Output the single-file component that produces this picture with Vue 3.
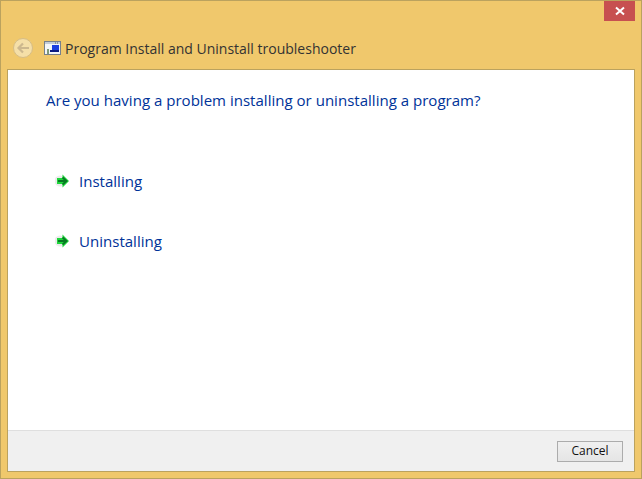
<script setup>
const options = ['Installing', 'Uninstalling']
</script>

<template>
  <div class="window">
    <div class="caption">
      <button class="close" aria-label="Close">
        <svg width="10" height="10" viewBox="0 0 10 10">
          <path d="M1 1.5 L9 8.5 M9 1.5 L1 8.5" stroke="#fff" stroke-width="2" fill="none" />
        </svg>
      </button>
    </div>
    <div class="titlebar">
      <span class="back">
        <svg width="14" height="12" viewBox="0 0 14 12">
          <path d="M13 6 H3 M7 1.5 L2.5 6 L7 10.5" stroke="#cdb88e" stroke-width="2.2" fill="none" />
        </svg>
      </span>
      <svg class="app-icon" width="17" height="14" viewBox="0 0 17 14">
        <rect x="0.5" y="0.5" width="16" height="13" fill="#f4f6f8" stroke="#77808c" />
        <rect x="1" y="1" width="15" height="2" fill="#c3ccd8" />
        <path d="M11 2 h1 M13 2 h1" stroke="#556" stroke-width="1" />
        <rect x="8" y="4" width="7" height="6" fill="#1c3fe0" />
        <rect x="6" y="9" width="9" height="2" fill="#0b1a80" />
        <rect x="3" y="8" width="2" height="5" fill="#7e9a7a" />
      </svg>
      <span class="title">Program Install and Uninstall troubleshooter</span>
    </div>
    <div class="content">
      <div class="main">
        <h1>Are you having a problem installing or uninstalling a program?</h1>
        <ul class="options">
          <li v-for="opt in options" :key="opt">
            <svg class="arrow" width="16" height="16" viewBox="0 0 16 16">
              <circle cx="5" cy="8" r="5.5" fill="#e6e6e6" opacity="0.8" />
              <path d="M2 5 H7.5 V1.5 L14 8 L7.5 14.5 V11 H2 Z" fill="#1fd63c" />
              <path d="M3 8 H10.5 M7.5 4.5 L11.5 8 L7.5 11.5" stroke="#067a22" stroke-width="1.8" fill="none" />
            </svg>
            <span>{{ opt }}</span>
          </li>
        </ul>
      </div>
      <div class="footer">
        <button class="cancel">Cancel</button>
      </div>
    </div>
  </div>
</template>

<style>
html, body {
  margin: 0;
  background: #f0c86c;
}
</style>

<style scoped>
.window {
  box-sizing: border-box;
  width: 642px;
  height: 479px;
  background: #f0c86c;
  border: 1px solid #bba25e;
  display: flex;
  flex-direction: column;
  font-family: "Open Sans", "Noto Sans", sans-serif;
}

.caption {
  height: 20px;
  display: flex;
  justify-content: flex-end;
  padding-right: 6px;
}

.close {
  width: 31px;
  height: 20px;
  background: #c75050;
  border: none;
  padding: 0;
  display: flex;
  align-items: center;
  justify-content: center;
}

.titlebar {
  height: 48px;
  display: flex;
  align-items: center;
  padding: 6px 0 0 12px;
  box-sizing: border-box;
}

.back {
  width: 18px;
  height: 18px;
  border-radius: 50%;
  background: #f5dfa8;
  border: 1px solid #d6bd86;
  display: flex;
  align-items: center;
  justify-content: center;
}

.app-icon {
  margin-left: 11px;
}

.title {
  margin-left: 4px;
  font-size: 14px;
  color: #333;
}

.content {
  flex: 1;
  margin: 0 6px 6px;
  background: #fff;
  border: 1px solid #bba25e;
  display: flex;
  flex-direction: column;
}

.main {
  flex: 1;
  padding: 20px 0 0 38px;
}

h1 {
  margin: 0;
  font-size: 15.06px;
  font-weight: 400;
  line-height: 20px;
  color: #003399;
}

.options {
  list-style: none;
  margin: 41px 0 0;
  padding: 0;
}

.options li {
  height: 60px;
  display: flex;
  align-items: center;
  font-size: 15.06px;
  color: #003399;
}

.arrow {
  margin: 0 8px 0 9px;
}

.footer {
  height: 41px;
  box-sizing: border-box;
  background: #f0f0f0;
  border-top: 1px solid #dfdfdf;
  display: flex;
  align-items: center;
  justify-content: flex-end;
  padding-right: 11px;
}

.cancel {
  width: 66px;
  height: 21px;
  padding: 0 0 1px;
  background: linear-gradient(#f0f0f0, #e5e5e5);
  border: 1px solid #acacac;
  font-family: "Open Sans", "Noto Sans", sans-serif;
  font-size: 12px;
  color: #111;
}
</style>
